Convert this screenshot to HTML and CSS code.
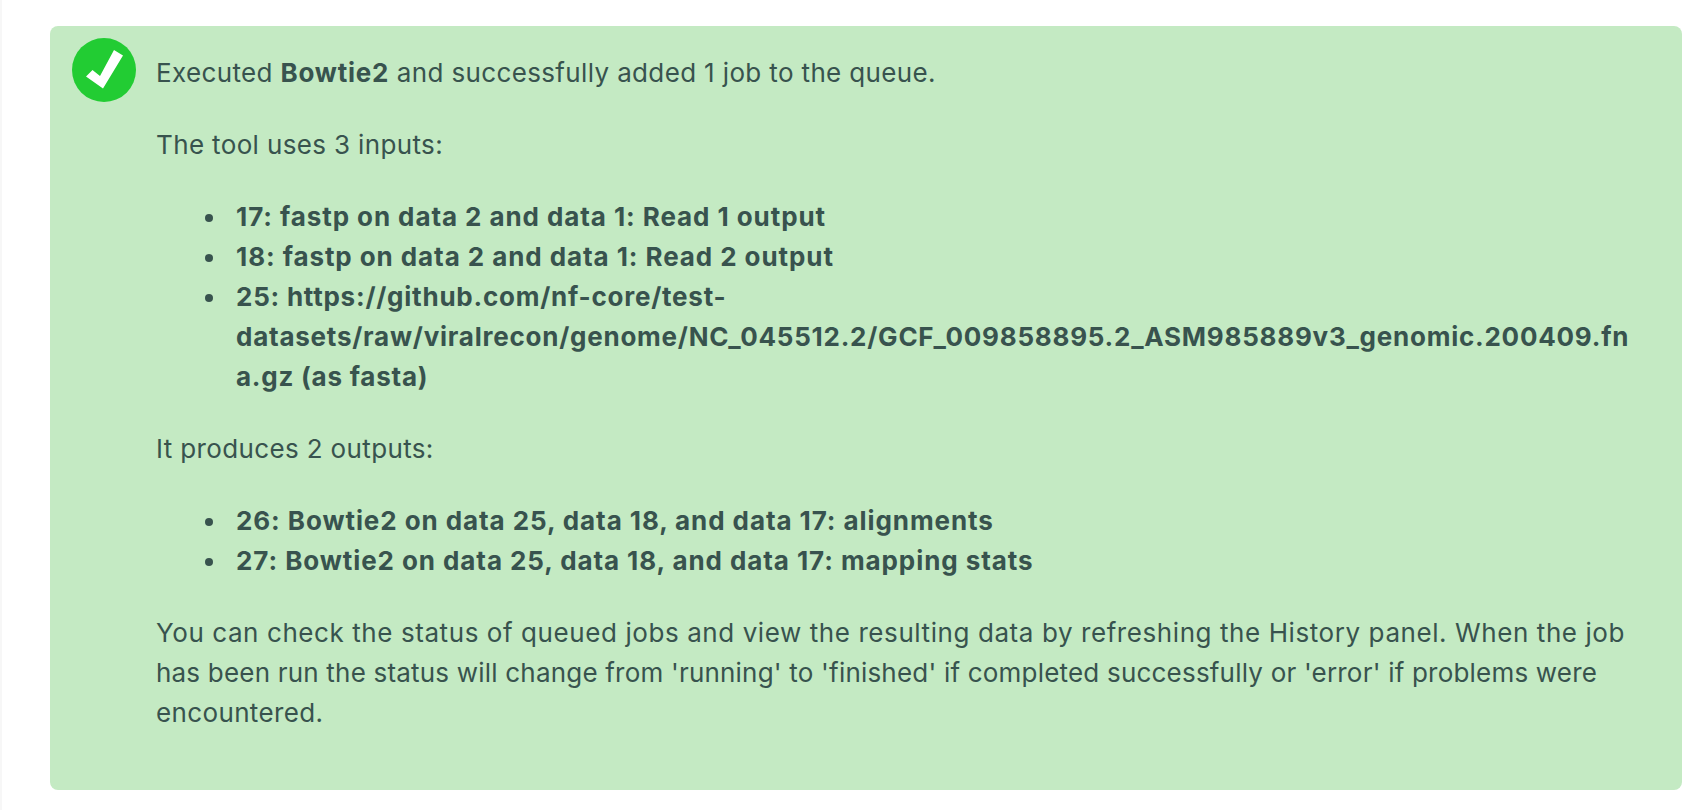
FILE: index.html
```html
<!DOCTYPE html>
<html lang="en">
<head>
<meta charset="utf-8">
<title>Bowtie2</title>
<link rel="stylesheet" href="styles.css">
</head>
<body>
<div class="page">
  <div class="message">
    <svg class="icon" viewBox="0 0 64 64" aria-hidden="true">
      <circle cx="32" cy="32" r="32" fill="#22cc33"/>
      <path d="M14 38.5 L20.5 32 L28 38 L42 12 L51 17.5 L31 50.5 Z" fill="#fff"/>
    </svg>
    <div class="content">
      <p>Executed <b>Bowtie2</b> and successfully added 1 job to the queue.</p>
      <p>The tool uses 3 inputs:</p>
      <ul>
        <li>17: fastp on data 2 and data 1: Read 1 output</li>
        <li>18: fastp on data 2 and data 1: Read 2 output</li>
        <li><span class="url">25: https://github.com/nf-core/test-datasets/raw/viralrecon/genome/NC_045512.2/GCF_009858895.2_ASM985889v3_genomic.200409.fna.gz (as fasta)</span></li>
      </ul>
      <p>It produces 2 outputs:</p>
      <ul>
        <li>26: Bowtie2 on data 25, data 18, and data 17: alignments</li>
        <li>27: Bowtie2 on data 25, data 18, and data 17: mapping stats</li>
      </ul>
      <p><span class="wide">You can check the status of queued jobs and view the resulting data by refreshing the History panel. When the job</span> <span class="tight">has been run the status will change from 'running' to 'finished' if completed successfully or 'error' if problems were</span> encountered.</p>
    </div>
  </div>
</div>
</body>
</html>
```
FILE: styles.css
```css
html, body {
  margin: 0;
  height: 100%;
  background: #fff;
  overflow: hidden;
}
.page {
  box-sizing: border-box;
  height: 810px;
  padding: 26px 26px 0 48px;
  border-left: 2px solid #f7f7f7;
}
.message {
  display: flex;
  align-items: flex-start;
  gap: 20px;
  box-sizing: border-box;
  height: 764px;
  padding: 12px 52px 0 22px;
  background: #c4eac3;
  border-radius: 8px;
  color: #38534e;
  font: 26px/40px Inter, "Liberation Sans", sans-serif;
  letter-spacing: 0.36px;
}
.icon {
  flex: none;
  width: 64px;
  height: 64px;
}
.content {
  flex: 1;
  min-width: 0;
  padding-top: 15px;
  overflow-wrap: anywhere;
}
p {
  margin: 0 0 32px;
}
b {
  letter-spacing: 0.75px;
}
ul {
  margin: 0 0 32px;
  padding-left: 80px;
  list-style: none;
  font-weight: 700;
  letter-spacing: 0.92px;
}
li {
  position: relative;
}
li::before {
  content: "";
  position: absolute;
  left: -31px;
  top: 17px;
  width: 8px;
  height: 8px;
  border-radius: 50%;
  background: currentColor;
}
.url {
  letter-spacing: 0.76px;
}
.wide {
  letter-spacing: 0.58px;
}
.tight {
  letter-spacing: 0.2px;
}
```
